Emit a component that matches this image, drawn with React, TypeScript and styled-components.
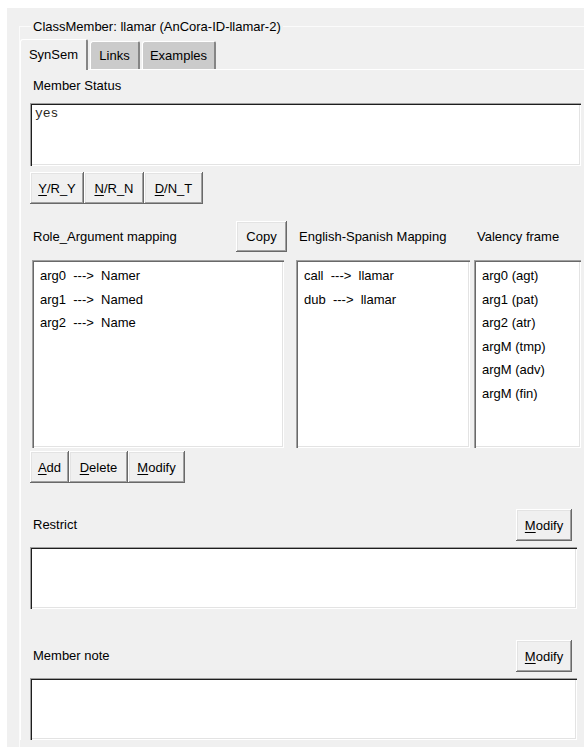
import React from "react";
import styled, { createGlobalStyle, css } from "styled-components";

const GlobalStyle = createGlobalStyle`
  html, body { margin: 0; padding: 0; background: #ffffff; }
  body {
    font-family: "Liberation Sans", Arial, sans-serif;
    font-size: 13px;
    color: #000;
  }
  *, *::before, *::after { box-sizing: border-box; }
`;

const Screen = styled.div`
  width: 584px;
  height: 747px;
  overflow: hidden;
  padding: 8px 0 0 7px;
  display: flex;
  background: #ffffff;
`;

const Dialog = styled.div`
  flex: 1;
  min-width: 0;
  background: #f0f0f0;
  padding: 11px 0 0 12px;
  display: flex;
  flex-direction: column;
`;

const Group = styled.fieldset`
  margin: 0;
  padding: 0;
  width: 600px;
  flex: 1;
  min-inline-size: 0;
  border: 1px solid #fbfbfb;
  border-right: none;
  border-bottom: none;
`;

const Caption = styled.legend`
  margin-left: 11px;
  padding: 0 2px;
  line-height: 15px;
  font-size: 13px;
`;

const TabStrip = styled.div`
  display: flex;
  align-items: flex-end;
  height: 30px;
  margin-top: 5px;
`;

const Tab = styled.div<{ $active?: boolean; $w: number }>`
  width: ${(p) => p.$w}px;
  height: ${(p) => (p.$active ? 31 : 28)}px;
  margin-left: ${(p) => (p.$active ? 0 : 2)}px;
  display: flex;
  align-items: center;
  justify-content: center;
  background: ${(p) => (p.$active ? "#f0f0f0" : "#cbcbcb")};
  border-top: 1px solid #ffffff;
  border-left: 1px solid #ffffff;
  border-right: 2px solid #858585;
  border-top-left-radius: 3px;
  border-top-right-radius: 2px;
  padding-bottom: ${(p) => (p.$active ? 2 : 0)}px;
  ${(p) =>
    p.$active &&
    css`
      margin-bottom: -1px;
      position: relative;
      z-index: 1;
    `}
`;

const TabPanel = styled.div`
  border-top: 1px solid #ffffff;
  border-left: 1px solid #ffffff;
  padding: 8px 0 0 9px;
  display: flex;
  flex-direction: column;
`;

const Label = styled.div<{ $pad?: number }>`
  padding-left: ${(p) => p.$pad ?? 3}px;
  line-height: 16px;
  white-space: nowrap;
`;

const sunken = css`
  background: #ffffff;
  box-shadow: inset 1px 1px 0 #a0a0a0, inset 2px 2px 0 #1e1e1e,
    inset -1px -1px 0 #ffffff, inset -2px -2px 0 #e3e3e3;
`;

const Memo = styled.textarea<{ $w: number; $h: number; $top: number }>`
  display: block;
  width: ${(p) => p.$w}px;
  height: ${(p) => p.$h}px;
  margin: ${(p) => p.$top}px 0 0 0;
  border: none;
  outline: none;
  resize: none;
  overflow: hidden;
  padding: 3px 5px;
  font-family: "Liberation Mono", "Courier New", monospace;
  font-size: 13px;
  line-height: 16px;
  color: #2a2520;
  ${sunken}
`;

const ButtonRow = styled.div<{ $top: number }>`
  display: flex;
  margin-top: ${(p) => p.$top}px;
`;

const Btn = styled.button<{ $w: number; $h?: number }>`
  width: ${(p) => p.$w}px;
  height: ${(p) => p.$h ?? 32}px;
  flex: none;
  margin: 0;
  padding: 0;
  border: none;
  font: inherit;
  font-size: 13px;
  color: #000;
  background: #f0f0f0;
  box-shadow: inset -1px -1px 0 #696969, inset 1px 1px 0 #ffffff,
    inset -2px -2px 0 #a0a0a0, inset 2px 2px 0 #e3e3e3;
  u {
    text-decoration: underline;
    text-underline-offset: 2px;
  }
`;

const MapGrid = styled.div<{ $top: number }>`
  display: grid;
  grid-template-columns: 264px 178px 107px;
  align-items: center;
  margin: ${(p) => p.$top}px 0 0 2px;
`;

const HeadCell = styled.div<{ $w?: number }>`
  display: flex;
  align-items: center;
  justify-content: space-between;
  width: ${(p) => (p.$w ? `${p.$w}px` : "auto")};
`;

const ListBox = styled.ul<{ $w: number }>`
  width: ${(p) => p.$w}px;
  height: 188px;
  margin: 0;
  padding: 4px 0 0 8px;
  list-style: none;
  background: #ffffff;
  box-shadow: inset 1px 1px 0 #a0a0a0, inset 2px 2px 0 #696969,
    inset -1px -1px 0 #ffffff, inset -2px -2px 0 #e3e3e3;
`;

const ListItem = styled.li`
  line-height: 23.6px;
  white-space: pre;
`;

const SectionHead = styled.div<{ $top: number }>`
  display: flex;
  align-items: center;
  justify-content: space-between;
  width: 542px;
  margin-top: ${(p) => p.$top}px;
`;

const roleArgs = [
  ["arg0", "Namer"],
  ["arg1", "Named"],
  ["arg2", "Name"],
];

const translations = [
  ["call", "llamar"],
  ["dub", "llamar"],
];

const valency = [
  "arg0 (agt)",
  "arg1 (pat)",
  "arg2 (atr)",
  "argM (tmp)",
  "argM (adv)",
  "argM (fin)",
];

export default function App() {
  return (
    <>
      <GlobalStyle />
      <Screen>
        <Dialog>
          <Group>
            <Caption>ClassMember: llamar (AnCora-ID-llamar-2)</Caption>
            <TabStrip>
              <Tab $active $w={68}>SynSem</Tab>
              <Tab $w={50}>Links</Tab>
              <Tab $w={74}>Examples</Tab>
            </TabStrip>
            <TabPanel>
              <Label>Member Status</Label>
              <Memo $w={551} $h={63} $top={9} readOnly defaultValue="yes" />
              <ButtonRow $top={6}>
                <Btn $w={54}>
                  <u>Y</u>/R_Y
                </Btn>
                <Btn $w={60}>
                  <u>N</u>/R_N
                </Btn>
                <Btn $w={59}>
                  <u>D</u>/N_T
                </Btn>
              </ButtonRow>

              <MapGrid $top={17}>
                <HeadCell $w={255}>
                  <Label $pad={1}>Role_Argument mapping</Label>
                  <Btn $w={51} $h={31}>
                    Copy
                  </Btn>
                </HeadCell>
                <Label $pad={3}>English-Spanish Mapping</Label>
                <Label $pad={3}>Valency frame</Label>
              </MapGrid>

              <MapGrid $top={8}>
                <ListBox $w={252}>
                  {roleArgs.map(([arg, role]) => (
                    <ListItem key={arg}>{`${arg}  --->  ${role}`}</ListItem>
                  ))}
                </ListBox>
                <ListBox $w={174}>
                  {translations.map(([en, es]) => (
                    <ListItem key={en}>{`${en}  --->  ${es}`}</ListItem>
                  ))}
                </ListBox>
                <ListBox $w={107}>
                  {valency.map((v) => (
                    <ListItem key={v}>{v}</ListItem>
                  ))}
                </ListBox>
              </MapGrid>

              <ButtonRow $top={3}>
                <Btn $w={39}>
                  <u>A</u>dd
                </Btn>
                <Btn $w={59}>
                  <u>D</u>elete
                </Btn>
                <Btn $w={57}>
                  <u>M</u>odify
                </Btn>
              </ButtonRow>

              <SectionHead $top={26}>
                <Label>Restrict</Label>
                <Btn $w={56}>
                  <u>M</u>odify
                </Btn>
              </SectionHead>
              <Memo $w={547} $h={62} $top={6} readOnly defaultValue="" />

              <SectionHead $top={31}>
                <Label>Member note</Label>
                <Btn $w={56}>
                  <u>M</u>odify
                </Btn>
              </SectionHead>
              <Memo $w={547} $h={62} $top={6} readOnly defaultValue="" />
            </TabPanel>
          </Group>
        </Dialog>
      </Screen>
    </>
  );
}
